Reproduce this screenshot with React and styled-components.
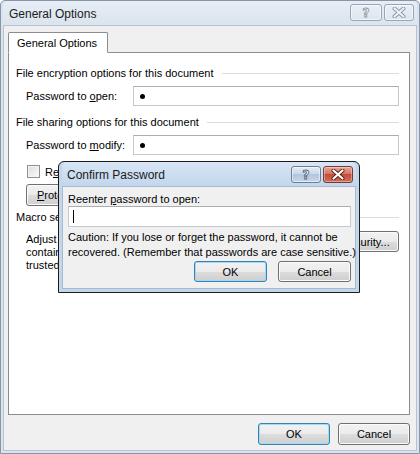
import React from "react";
import styled, { createGlobalStyle, css } from "styled-components";

const GlobalStyle = createGlobalStyle`
  html, body {
    margin: 0;
    padding: 0;
    background: #ffffff;
  }
  body {
    font-family: "Liberation Sans", Arial, sans-serif;
    font-size: 11px;
    color: #000;
  }
  * { box-sizing: border-box; }
`;

/* ---------- window chrome ---------- */

const Window = styled.div`
  position: relative;
  width: 420px;
  height: 454px;
  display: flex;
  flex-direction: column;
  border: 1px solid #8795a6;
  border-radius: 5px 5px 0 0;
  background: #dbe4ee;
  padding: 0 2px 2px;
`;

const TitleBar = styled.div`
  height: 24px;
  flex: none;
  display: flex;
  align-items: center;
  justify-content: space-between;
  padding: 0 3px 0 ${(p) => (p.$active ? 5 : 6)}px;
  background: ${(p) =>
    p.$active
      ? "linear-gradient(#d8e6f5, #c2d6ec)"
      : "linear-gradient(#e6edf5, #dbe4ee)"};
  border-radius: 5px 5px 0 0;
`;

const Caption = styled.span`
  font-size: 12px;
  color: #1b1b1b;
  padding-top: ${(p) => (p.$pad ? p.$pad : 0)}px;
`;

const CaptionButtons = styled.div`
  display: flex;
  gap: 2px;
  align-self: flex-start;
  margin-top: ${(p) => p.$top}px;
`;

const CaptionButton = styled.div`
  width: ${(p) => p.$w}px;
  height: 17px;
  border-radius: 3px;
  display: flex;
  align-items: center;
  justify-content: center;
  ${(p) =>
    p.$variant === "close"
      ? css`
          border: 1px solid #7b3a2f;
          background: linear-gradient(#e5a79c, #d47566 45%, #c44c38 50%, #d0705c);
          box-shadow: inset 0 0 0 1px rgba(255, 255, 255, 0.35);
        `
      : p.$variant === "active"
      ? css`
          border: 1px solid #6d7f96;
          background: linear-gradient(#e3ecf6, #c9d8ea 45%, #b1c6df 50%, #c6d6e9);
          box-shadow: inset 0 0 0 1px rgba(255, 255, 255, 0.5);
        `
      : css`
          border: 1px solid #98a6b6;
          background: linear-gradient(#e9eff6, #dde6ef);
          box-shadow: inset 0 0 0 1px rgba(255, 255, 255, 0.55);
        `}
`;

const HelpGlyph = styled.span`
  font-family: "DejaVu Sans", sans-serif;
  font-weight: bold;
  font-size: 12px;
  line-height: 1;
  color: ${(p) => (p.$active ? "#ffffff" : "#f4f6f8")};
  -webkit-text-stroke: 0.8px ${(p) => (p.$active ? "#4d5d72" : "#8a96a4")};
`;

const Client = styled.div`
  flex: 1;
  display: flex;
  flex-direction: column;
  background: #f0f0f0;
  border: 1px solid #b7c3d0;
  padding: 6px 6px 5px 4px;
`;

/* ---------- tab ---------- */

const TabStrip = styled.div`
  display: flex;
  position: relative;
  z-index: 1;
  margin-bottom: -1px;
`;

const Tab = styled.div`
  height: 21px;
  padding: 0 10px 0 8px;
  display: flex;
  align-items: center;
  background: #ffffff;
  border: 1px solid #898c95;
  border-bottom-color: #ffffff;
  border-radius: 2px 2px 0 0;
`;

const TabPanel = styled.div`
  flex: 1;
  background: #ffffff;
  border: 1px solid #898c95;
  display: flex;
  flex-direction: column;
  padding: 13px 10px 0 7px;
`;

const GroupHeading = styled.div`
  display: flex;
  align-items: center;
  gap: 8px;
  line-height: 14px;
  margin-top: ${(p) => p.$top || 0}px;

  &::after {
    content: "";
    flex: 1;
    height: 1px;
    background: #d5dfe5;
  }
`;

const FieldRow = styled.div`
  display: flex;
  align-items: center;
  padding-left: 10px;
  margin-top: 6px;
`;

const FieldLabel = styled.span`
  width: 107px;
  flex: none;
`;

const TextBox = styled.div`
  flex: 1;
  height: ${(p) => p.$h || 20}px;
  background: #ffffff;
  border: 1px solid #c5c9d0;
  border-top-color: #abadb3;
  display: flex;
  align-items: center;
  padding-left: ${(p) => p.$pl || 5}px;
`;

const Dot = styled.span`
  width: 5px;
  height: 5px;
  border-radius: 50%;
  background: #000;
`;

const Caret = styled.span`
  width: 1px;
  height: 13px;
  background: #000;
`;

const Key = styled.u`
  text-decoration: underline;
  text-underline-offset: 1px;
`;

const CheckRow = styled.label`
  display: flex;
  align-items: center;
  gap: 5px;
  padding-left: 11px;
  margin-top: 10px;
`;

const CheckBox = styled.span`
  width: 13px;
  height: 13px;
  border: 1px solid #8e8f8f;
  background: linear-gradient(135deg, #dcdcdc, #fbfbfb);
  box-shadow: inset 0 0 0 1px #f4f4f4;
`;

const Indent = styled.div`
  padding-left: 10px;
  margin-top: ${(p) => p.$top || 0}px;
  display: flex;
  align-items: flex-start;
  gap: ${(p) => p.$gap || 0}px;
`;

const Paragraph = styled.p`
  margin: 2px 0 0;
  flex: 1;
  line-height: 13px;
  white-space: nowrap;
`;

const Button = styled.button`
  font-family: inherit;
  font-size: 11px;
  color: #000;
  height: ${(p) => p.$h || 22}px;
  width: ${(p) => (p.$w ? `${p.$w}px` : "auto")};
  padding: 0 10px;
  border-radius: 3px;
  border: 1px solid ${(p) => (p.$default ? "#3c7fb1" : "#707070")};
  background: linear-gradient(#f2f2f2 0%, #ebebeb 50%, #dddddd 51%, #cfcfcf 100%);
  box-shadow: inset 0 0 0 1px ${(p) => (p.$default ? "#9fdaf7" : "#fbfbfb")};
  flex: none;
  white-space: nowrap;
`;

const Footer = styled.div`
  display: flex;
  justify-content: flex-end;
  gap: 8px;
  padding-top: 8px;
`;

/* ---------- confirm dialog ---------- */

const Dialog = styled.div`
  position: absolute;
  left: 57px;
  top: 160px;
  width: 302px;
  height: 132px;
  display: flex;
  flex-direction: column;
  border: 1px solid #1c1c1c;
  border-radius: 6px 6px 0 0;
  background: #c2d6ec;
  padding: 0 3px 3px;
`;

const DialogBody = styled.div`
  flex: 1;
  background: #f0f0f0;
  border: 1px solid #a6bad1;
  padding: 5px 4px 6px 5px;
  display: flex;
  flex-direction: column;
`;

const Prompt = styled.div`
  line-height: 14px;
`;

const Caution = styled.p`
  margin: 3px 0 0;
  line-height: 15px;
  white-space: nowrap;
`;

const DialogButtons = styled.div`
  display: flex;
  justify-content: flex-end;
  gap: 11px;
  margin-top: 1px;
`;

const CloseIcon = ({ active }) => (
  <svg width="14" height="11" viewBox="0 0 14 11">
    <path
      d="M2.5 1.5 L11.5 9.5 M11.5 1.5 L2.5 9.5"
      stroke={active ? "#5a2018" : "#8a96a4"}
      strokeWidth="4"
      strokeLinecap="round"
      fill="none"
    />
    <path
      d="M2.5 1.5 L11.5 9.5 M11.5 1.5 L2.5 9.5"
      stroke={active ? "#ffffff" : "#eef2f6"}
      strokeWidth="2.2"
      strokeLinecap="round"
      fill="none"
    />
  </svg>
);

const App = () => {
  return (
    <>
      <GlobalStyle />
      <Window>
        <TitleBar>
          <Caption $pad={1}>General Options</Caption>
          <CaptionButtons $top={3}>
            <CaptionButton $w={32}>
              <HelpGlyph>?</HelpGlyph>
            </CaptionButton>
            <CaptionButton $w={30}>
              <CloseIcon />
            </CaptionButton>
          </CaptionButtons>
        </TitleBar>

        <Client>
          <TabStrip>
            <Tab>General Options</Tab>
          </TabStrip>
          <TabPanel>
            <GroupHeading>File encryption options for this document</GroupHeading>
            <FieldRow>
              <FieldLabel>
                Password to <Key>o</Key>pen:
              </FieldLabel>
              <TextBox $pl={6}>
                <Dot />
              </TextBox>
            </FieldRow>

            <GroupHeading $top={9}>File sharing options for this document</GroupHeading>
            <FieldRow>
              <FieldLabel>
                Password to <Key>m</Key>odify:
              </FieldLabel>
              <TextBox $pl={6}>
                <Dot />
              </TextBox>
            </FieldRow>

            <CheckRow>
              <CheckBox />
              <span>
                R<Key>e</Key>ad-only recommended
              </span>
            </CheckRow>

            <Indent $top={6}>
              <Button>
                <Key>P</Key>rotect Document...
              </Button>
            </Indent>

            <GroupHeading $top={4}>Macro security</GroupHeading>
            <Indent $top={7} $gap={8}>
              <Paragraph>
                Adjust the security level for opening files that might
                <br />
                contain macro viruses, and specify the names of
                <br />
                trusted macro developers.
              </Paragraph>
              <Button $w={102} $h={21}>
                Macro <Key>S</Key>ecurity...
              </Button>
            </Indent>
          </TabPanel>

          <Footer>
            <Button $default $w={72}>
              OK
            </Button>
            <Button $w={72}>Cancel</Button>
          </Footer>
        </Client>

        <Dialog>
          <TitleBar $active>
            <Caption $pad={2}>Confirm Password</Caption>
            <CaptionButtons $top={4}>
              <CaptionButton $w={30} $variant="active">
                <HelpGlyph $active>?</HelpGlyph>
              </CaptionButton>
              <CaptionButton $w={30} $variant="close">
                <CloseIcon active />
              </CaptionButton>
            </CaptionButtons>
          </TitleBar>
          <DialogBody>
            <Prompt>
              Reenter <Key>p</Key>assword to open:
            </Prompt>
            <TextBox $h={20} $pl={4}>
              <Caret />
            </TextBox>
            <Caution>
              Caution: If you lose or forget the password, it cannot be
              <br />
              recovered. (Remember that passwords are case sensitive.)
            </Caution>
            <DialogButtons>
              <Button $default $w={73} $h={21}>
                OK
              </Button>
              <Button $w={73} $h={21}>
                Cancel
              </Button>
            </DialogButtons>
          </DialogBody>
        </Dialog>
      </Window>
    </>
  );
};

export default App;
